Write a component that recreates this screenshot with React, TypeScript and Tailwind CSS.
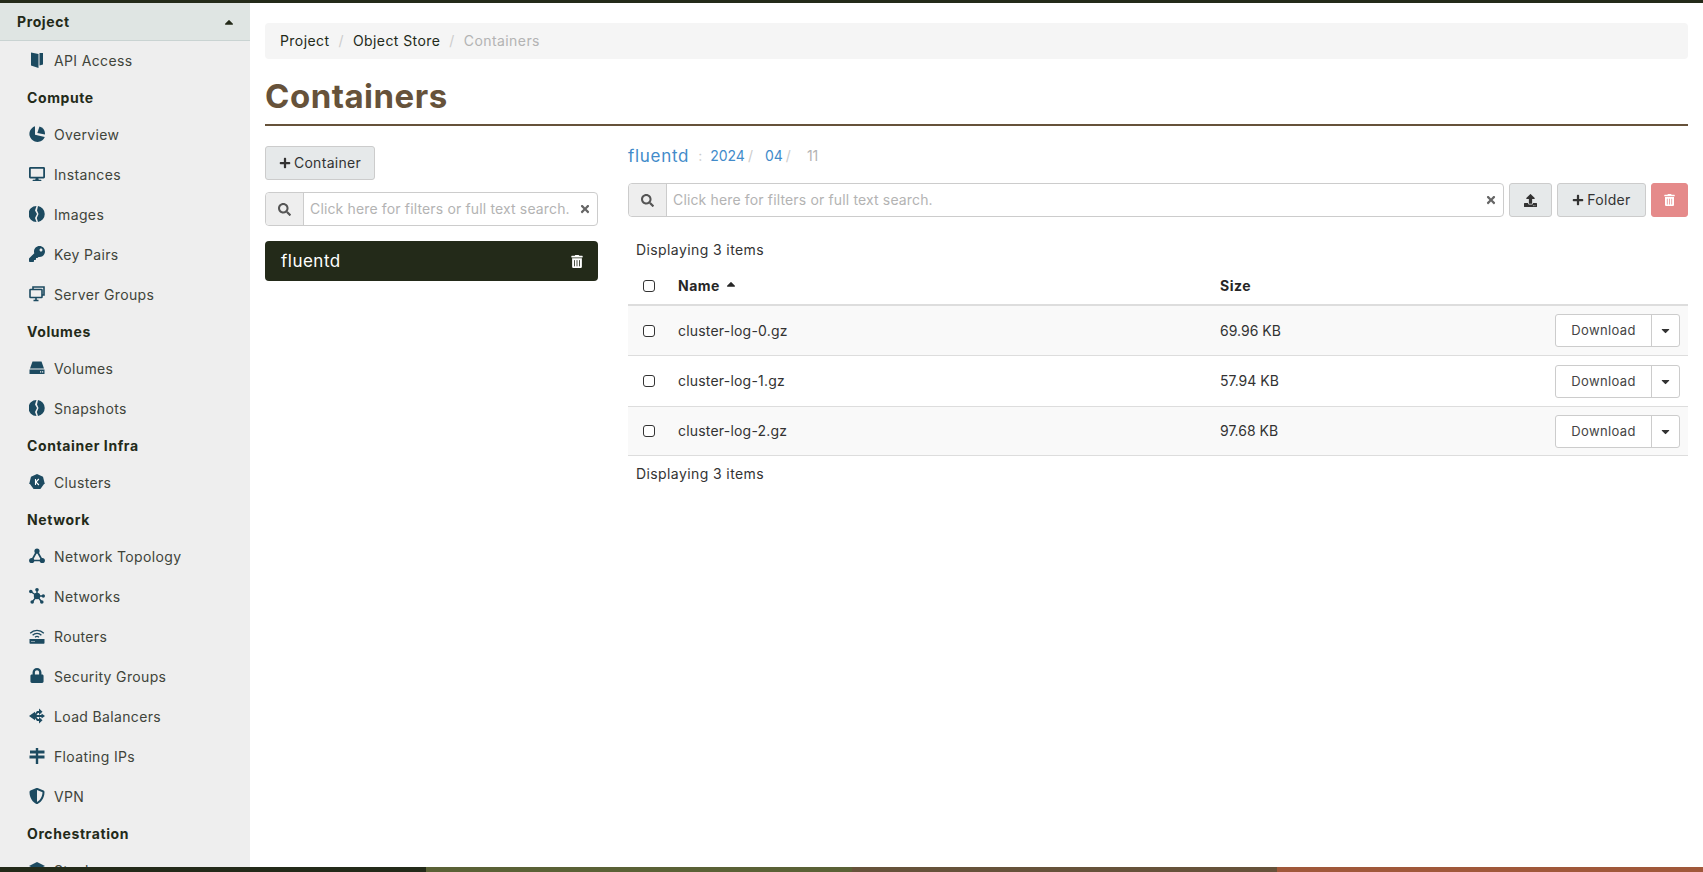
import React from "react";
import { FaCaretDown, FaCaretUp, FaDesktop, FaKey, FaLock, FaPlus, FaSearch, FaShieldAlt, FaTimes, FaTrashAlt, FaUpload } from "react-icons/fa";

const ic = "w-4 h-4 text-[#1c4a60]";

function DoorIcon() {
    return (
        <svg viewBox="0 0 16 16" className={ic} fill="currentColor">
            <path d="M2 .5 9.500 2v14L2 13.500z" />
            <path d="M10.500 1H14v11.500l-3.500 1z" />
        </svg>
    );
}

function PieIcon() {
    return (
        <svg viewBox="0 0 16 16" className={ic} fill="currentColor">
            <path d="M6 .3V8.800l9.800 2.200A8 8 0 1 1 6 .3z" />
            <path d="M10.500.5A8 8 0 0 1 16 8.500L8.300 7z" />
        </svg>
    );
}

function DiscIcon() {
    return (
        <svg viewBox="0 0 16 16" className={ic} fill="currentColor">
            <path d="M7.500 0 6 4.500 8 8l-2 4 1.500 4A8 8 0 0 1 7.500 0z" />
            <path d="M9 .1 8 4.500 9.500 8l-1.700 4L9 15.900A8 8 0 0 0 9 .1z" />
        </svg>
    );
}

function ServerGroupIcon() {
    return (
        <svg viewBox="0 0 16 16" className={ic} fill="none" stroke="currentColor" strokeWidth="1.600">
            <path d="M4 3V1h11v8h-2" />
            <rect x="1" y="3.500" width="12" height="8" rx=".5" />
            <path d="M4.500 14.500h5M7 12v2" />
        </svg>
    );
}

function VolumeIcon() {
    return (
        <svg viewBox="0 0 16 16" className={ic}>
            <path d="M3.500 1.500h9L15 8.500H1z" fill="currentColor" />
            <path d="M.5 9.500h15v4.500H.5z" fill="currentColor" />
            <path d="M11 11.800h1.200M13 11.800h1.200" stroke="#eeeeee" strokeWidth="1.200" />
        </svg>
    );
}

function ClusterIcon() {
    return (
        <svg viewBox="0 0 16 16" className={ic}>
            <path d="M8 0l6 2.800 1.600 6.400-4.200 5.800H4.600L.4 9.200 2 2.800z" fill="currentColor" />
            <path d="M6.500 5v6M9.800 5 6.900 8l3 3" stroke="#fff" strokeWidth="1.100" fill="none" />
        </svg>
    );
}

function TopologyIcon() {
    return (
        <svg viewBox="0 0 16 16" className={ic} fill="currentColor">
            <circle cx="8" cy="3" r="2.600" />
            <circle cx="2.700" cy="12.500" r="2.600" />
            <circle cx="13.300" cy="12.500" r="2.600" />
            <path d="M8 3 2.700 12.500h10.600z" fill="none" stroke="currentColor" strokeWidth="1.700" />
        </svg>
    );
}

function NetworksIcon() {
    return (
        <svg viewBox="0 0 16 16" className={ic} fill="currentColor">
            <circle cx="8" cy="8" r="3.200" />
            <circle cx="8" cy="1.800" r="1.800" />
            <circle cx="14.300" cy="8" r="1.700" />
            <circle cx="12.800" cy="14" r="1.800" />
            <circle cx="3.200" cy="14" r="1.800" />
            <circle cx="1.800" cy="3.500" r="1.800" />
            <path d="M8 8V1.800M8 8h6.300M8 8l4.800 6M8 8l-4.800 6M8 8 1.800 3.500" stroke="currentColor" strokeWidth="1.400" />
        </svg>
    );
}

function RouterIcon() {
    return (
        <svg viewBox="0 0 16 16" className={ic}>
            <path d="M1.200 5.200a9.500 9.500 0 0 1 13.600 0M3.600 7.300a6.200 6.200 0 0 1 8.800 0M6 9.300a3 3 0 0 1 4 0" fill="none" stroke="currentColor" strokeWidth="1.300" />
            <path d="M.5 11h15v4a.7.7 0 0 1-.7.700H1.200A.7.7 0 0 1 .5 15z" fill="currentColor" />
            <path d="M2.500 13.500h1M4.500 13.500h1" stroke="#eeeeee" strokeWidth="1" />
        </svg>
    );
}

function BalancerIcon() {
    return (
        <svg viewBox="0 0 16 16" className={ic} fill="currentColor">
            <path d="M0 8l6-4.200v8.400z" />
            <path d="M4 8h9M5.500 8 8.500 4h2M5.500 8l3 4h2" fill="none" stroke="currentColor" strokeWidth="2" />
            <path d="M10 .5l3.500 3.200L10 7z" />
            <path d="M10 9l3.500 3.300L10 15.500z" />
            <path d="M12.500 5.500 16 8l-3.500 2.500z" />
        </svg>
    );
}

function SignIcon() {
    return (
        <svg viewBox="0 0 16 16" className={ic} fill="currentColor">
            <path d="M6.800 0h2.400v16H6.800z" />
            <path d="M1 2.500h14.500v3H1z" />
            <path d="M.5 7.500h15v3H.5z" />
        </svg>
    );
}

function StackIcon() {
    return (
        <svg viewBox="0 0 16 16" className={ic} fill="currentColor">
            <path d="M8 0l8 4-8 4-8-4z" />
            <path d="M0 6.500 8 10.500l8-4V9l-8 4-8-4z" />
        </svg>
    );
}

type NavRow = { head: string } | { label: string; icon: React.ReactNode };

const nav: NavRow[] = [
    { label: "API Access", icon: <DoorIcon /> },
    { head: "Compute" },
    { label: "Overview", icon: <PieIcon /> },
    { label: "Instances", icon: <FaDesktop className={ic} /> },
    { label: "Images", icon: <DiscIcon /> },
    { label: "Key Pairs", icon: <FaKey className={ic} /> },
    { label: "Server Groups", icon: <ServerGroupIcon /> },
    { head: "Volumes" },
    { label: "Volumes", icon: <VolumeIcon /> },
    { label: "Snapshots", icon: <DiscIcon /> },
    { head: "Container Infra" },
    { label: "Clusters", icon: <ClusterIcon /> },
    { head: "Network" },
    { label: "Network Topology", icon: <TopologyIcon /> },
    { label: "Networks", icon: <NetworksIcon /> },
    { label: "Routers", icon: <RouterIcon /> },
    { label: "Security Groups", icon: <FaLock className="w-[14px] h-[15px] ml-[1px] text-[#1c4a60]" /> },
    { label: "Load Balancers", icon: <BalancerIcon /> },
    { label: "Floating IPs", icon: <SignIcon /> },
    { label: "VPN", icon: <FaShieldAlt className={ic} /> },
    { head: "Orchestration" },
    { label: "Stacks", icon: <StackIcon /> },
];

function Sidebar() {
    return (
        <div className="w-[250px] shrink-0 bg-[#eeeeee] overflow-hidden">
            <div className="h-[38px] bg-[#dfe5e3] border-b border-[#c9d3d2] flex items-center justify-between pl-[17px] pr-[14px] font-bold tracking-[0.6px] text-[#232a19]">
                <span>Project</span>
                <FaCaretUp className="w-[14px] h-[14px]" />
            </div>
            {nav.map((row, i) =>
                "head" in row ? (
                    <div key={i} className="h-[34px] flex items-center pl-[27px] font-bold tracking-[0.6px] text-[#232a19]">
                        {row.head}
                    </div>
                ) : (
                    <div key={i} className="h-[40px] flex items-center pl-[29px] tracking-[0.35px] text-[#40443a]">
                        <span className="w-[25px] -mt-[3px]">{row.icon}</span>
                        {row.label}
                    </div>
                )
            )}
        </div>
    );
}

function SearchBar({ className }: { className: string }) {
    return (
        <div className={"flex h-[34px] border border-[#cccccc] rounded bg-white " + className}>
            <div className="w-[38px] shrink-0 bg-[#eeeeee] border-r border-[#cccccc] rounded-l flex items-center justify-center text-[#555555]">
                <FaSearch className="w-[13px] h-[13px]" />
            </div>
            <div className="flex-1 min-w-0 pl-[6px] flex items-center tracking-[0.15px] text-[#b3b3b3] whitespace-nowrap">
                Click here for filters or full text search.
            </div>
            <div className="w-[25px] shrink-0 flex items-center justify-center text-[#666666]">
                <FaTimes className="w-[12px] h-[12px]" />
            </div>
        </div>
    );
}

function CheckBox() {
    return <span className="block w-[12px] h-[12px] border border-[#333333] rounded-[3px] bg-white" />;
}

const files = [
    { name: "cluster-log-0.gz", size: "69.96 KB", rowClass: "h-[50px] bg-[#f9f9f9]" },
    { name: "cluster-log-1.gz", size: "57.94 KB", rowClass: "h-[51px] bg-white" },
    { name: "cluster-log-2.gz", size: "97.68 KB", rowClass: "h-[49px] bg-[#f9f9f9]" },
];

function FileRow({ name, size, rowClass }: { name: string; size: string; rowClass: string }) {
    return (
        <div className={"flex items-center border-b border-[#dddddd] text-[#333333] " + rowClass}>
            <div className="w-[50px] flex justify-center ml-[-4px] mr-[4px]"><CheckBox /></div>
            <div className="w-[542px] tracking-[0.2px]">{name}</div>
            <div className="flex-1">{size}</div>
            <div className="flex h-[33px] mr-[8px] border border-[#cccccc] rounded-[3px] bg-white text-[13px] tracking-[0.35px] text-[#444444]">
                <div className="w-[96px] flex items-center justify-center border-r border-[#cccccc]">Download</div>
                <div className="w-[27px] flex items-center justify-center">
                    <FaCaretDown className="w-[13px] h-[13px] text-[#333333]" />
                </div>
            </div>
        </div>
    );
}

export default function App() {
    return (
        <div className="h-screen flex flex-col overflow-hidden bg-white text-sm font-['Inter',sans-serif] text-[#333333]">
            <div className="h-[3px] shrink-0 bg-[#232a19]" />
            <div className="flex flex-1 min-h-0">
                <Sidebar />
                <div className="flex-1 min-w-0 pl-[15px] pr-[15px] pt-[20px]">
                    {/* breadcrumb */}
                    <div className="h-[36px] bg-[#f5f5f5] rounded flex items-center pl-[15px] tracking-[0.42px] text-[#232a19]">
                        <span>Project</span>
                        <span className="px-[9px] text-[#cccccc]">/</span>
                        <span>Object Store</span>
                        <span className="px-[9px] text-[#cccccc]">/</span>
                        <span className="text-[#b3b3b3]">Containers</span>
                    </div>
                    <div className="h-[67px] pt-[11px] border-b-2 border-[#66523a] flex items-center">
                        <h1 className="text-[33px] font-bold tracking-[0.5px] text-[#66523a]">Containers</h1>
                    </div>
                    <div className="flex pt-[20px]">
                        {/* containers column */}
                        <div className="w-[333px] shrink-0">
                            <button className="h-[34px] w-[110px] bg-[#e6e9ea] border border-[#cccccc] rounded-[3px] flex items-center justify-center gap-[3px] tracking-[0.3px] text-[#333333]">
                                <FaPlus className="w-[12px] h-[12px]" /> Container
                            </button>
                            <SearchBar className="mt-[12px]" />
                            <div className="mt-[15px] h-[40px] bg-[#232a19] rounded flex items-center justify-between pl-[16px] pr-[15px] text-white text-[17px] tracking-[0.5px]">
                                <span>fluentd</span>
                                <FaTrashAlt className="w-[12px] h-[13px]" />
                            </div>
                        </div>
                        {/* objects column */}
                        <div className="flex-1 min-w-0 ml-[30px]">
                            <div className="h-[20px] flex items-center text-[#428bca]">
                                <span className="text-[17px] tracking-[0.7px]">fluentd</span>
                                <span className="pl-[9px] pr-[8px] text-[#cccccc]">:</span>
                                <span>2024</span>
                                <span className="pl-[3px] pr-[12px] text-[#cccccc]">/</span>
                                <span>04</span>
                                <span className="pl-[3px] pr-[16px] text-[#cccccc]">/</span>
                                <span className="text-[#b3b3b3]">11</span>
                            </div>
                            <div className="flex gap-[5px] mt-[17px]">
                                <SearchBar className="flex-1 min-w-0" />
                                <button className="w-[43px] h-[34px] bg-[#e6e9ea] border border-[#cccccc] rounded-[3px] flex items-center justify-center text-[#333333]">
                                    <FaUpload className="w-[13px] h-[13px]" />
                                </button>
                                <button className="w-[89px] h-[34px] bg-[#e6e9ea] border border-[#cccccc] rounded-[3px] flex items-center justify-center gap-[3px] tracking-[0.3px] text-[#333333]">
                                    <FaPlus className="w-[12px] h-[12px]" /> Folder
                                </button>
                                <button className="w-[37px] h-[34px] bg-[#e58a8a] border border-[#e58a8a] rounded-[3px] flex items-center justify-center text-white">
                                    <FaTrashAlt className="w-[11px] h-[12px]" />
                                </button>
                            </div>
                            <div className="h-[20px] mt-[23px] pl-[8px] flex items-center tracking-[0.4px]">Displaying 3 items</div>
                            <div className="h-[46px] pt-[7px] flex items-center border-b-2 border-[#dddddd] font-bold tracking-[0.5px] text-[#262626]">
                                <div className="w-[50px] flex justify-center ml-[-4px] mr-[4px]"><CheckBox /></div>
                                <div className="w-[542px] flex items-center gap-[4px]">
                                    Name <FaCaretUp className="w-[14px] h-[14px] -mt-[4px]" />
                                </div>
                                <div>Size</div>
                            </div>
                            {files.map((f) => (
                                <FileRow key={f.name} {...f} />
                            ))}
                            <div className="h-[20px] mt-[8px] pl-[8px] flex items-center tracking-[0.4px]">Displaying 3 items</div>
                        </div>
                    </div>
                </div>
            </div>
            <div className="h-[5px] shrink-0 grid grid-cols-4">
                <div className="bg-[#232a19]" />
                <div className="bg-[#5a6135]" />
                <div className="bg-[#66523a]" />
                <div className="bg-[#a0583a]" />
            </div>
        </div>
    );
}
